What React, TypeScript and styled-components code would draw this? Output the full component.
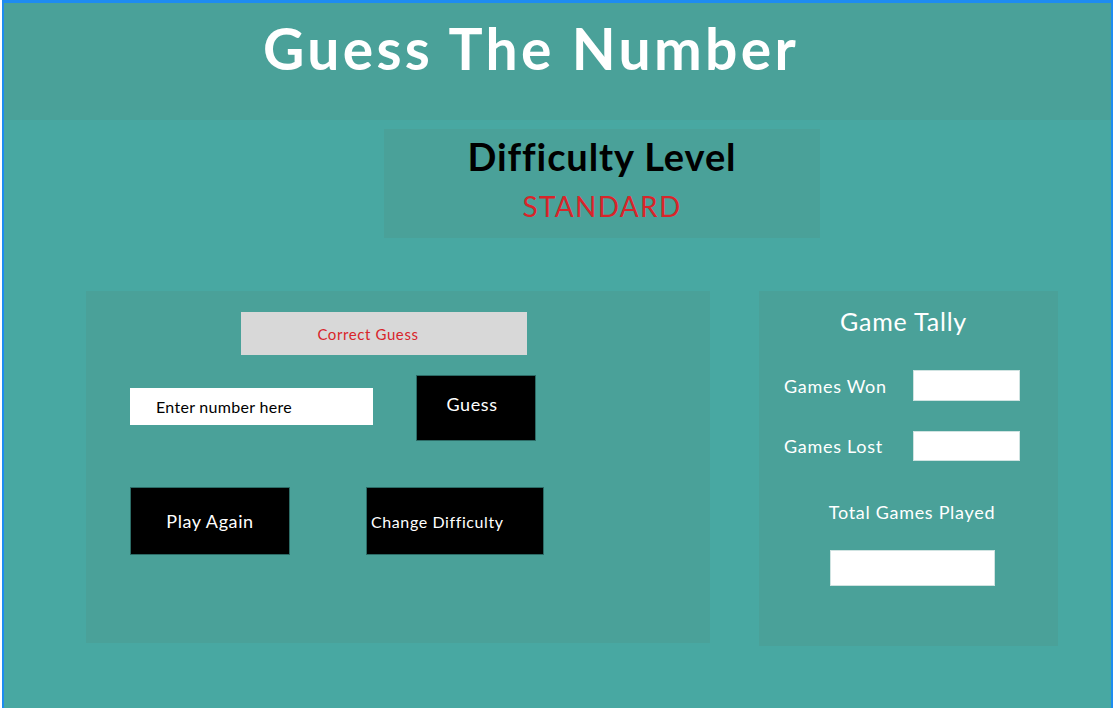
import React from "react";
import styled, { createGlobalStyle } from "styled-components";

const Global = createGlobalStyle`
  html, body { margin: 0; padding: 0; background: #ffffff; }
  body { font-family: "Lato", "Open Sans", sans-serif; overflow: hidden; }
  * { box-sizing: border-box; }
`;

const Frame = styled.div`
  margin-left: 2px;
  width: 1111px;
  height: 708px;
  border: 2px solid #1e8cf0;
  border-bottom: none;
  border-top-width: 3px;
  background: #48a8a2;
  display: flex;
  flex-direction: column;
`;

const Header = styled.header`
  height: 117px;
  background: #4aa199;
  display: flex;
  justify-content: flex-start;
  padding-left: 259px;
  padding-top: 10px;
`;

const Title = styled.h1`
  margin: 0;
  color: #ffffff;
  font-family: "Lato", sans-serif;
  font-weight: 700;
  font-size: 57px;
  letter-spacing: 3.3px;
  line-height: 70px;
`;

const Body = styled.main`
  display: flex;
  flex-direction: column;
  padding-top: 9px;
`;

const LevelBox = styled.section`
  margin-left: 380px;
  width: 436px;
  height: 109px;
  background: #4aa199;
  display: flex;
  flex-direction: column;
  align-items: center;
  padding-top: 4px;
`;

const LevelTitle = styled.h2`
  margin: 0;
  font-family: "Lato", sans-serif;
  font-weight: 700;
  font-size: 38px;
  letter-spacing: 0.9px;
  color: #000;
  line-height: 46px;
`;

const LevelValue = styled.div`
  margin-top: 9px;
  color: #d8252a;
  font-size: 28px;
  letter-spacing: 1.3px;
  line-height: 36px;
`;

const Row = styled.div`
  display: flex;
  align-items: flex-start;
  margin-top: 53px;
  margin-left: 82px;
  gap: 49px;
`;

const GamePanel = styled.section`
  width: 624px;
  height: 352px;
  background: #4aa199;
  display: flex;
  flex-direction: column;
  padding: 21px 0 0 44px;
`;

const Status = styled.div`
  margin-left: 111px;
  width: 286px;
  height: 43px;
  background: #d8d8d8;
  color: #d8252a;
  font-size: 15px;
  letter-spacing: 0.6px;
  display: flex;
  align-items: center;
  justify-content: center;
  padding-right: 32px;
`;

const GuessRow = styled.div`
  display: flex;
  align-items: center;
  margin-top: 20px;
  gap: 43px;
`;

const NumberInput = styled.input`
  width: 243px;
  height: 37px;
  border: none;
  background: #fff;
  padding-left: 26px;
  font-family: "Lato", sans-serif;
  font-size: 16px;
  letter-spacing: 0.3px;
  margin-top: -3px;
  outline: none;
  &::placeholder { color: #000; }
`;

const BlackButton = styled.button<{ $w: number; $h: number; $left?: boolean; $shift?: number }>`
  width: ${(p) => p.$w}px;
  height: ${(p) => p.$h}px;
  background: #000;
  color: #fff;
  border: 1px solid #2c6b66;
  font-family: "Lato", sans-serif;
  font-size: ${(p) => (p.$left ? 16 : 18)}px;
  letter-spacing: 0.6px;
  display: flex;
  align-items: center;
  justify-content: ${(p) => (p.$left ? "flex-start" : "center")};
  padding: 0 ${(p) => p.$shift ?? 0}px ${(p) => (p.$shift ? 8 : 0)}px ${(p) => (p.$left ? 4 : 0)}px;
`;

const ActionRow = styled.div`
  display: flex;
  margin-top: 46px;
  gap: 76px;
`;

const TallyPanel = styled.aside`
  width: 299px;
  height: 355px;
  background: #4aa199;
  display: flex;
  flex-direction: column;
  color: #fff;
  padding-top: 14px;
`;

const TallyTitle = styled.h3`
  margin: 0 10px 0 0;
  text-align: center;
  font-family: "Lato", sans-serif;
  font-weight: 400;
  font-size: 25px;
  letter-spacing: 0.8px;
  line-height: 32px;
`;

const StatRow = styled.div<{ $top: number }>`
  display: grid;
  grid-template-columns: 129px 107px;
  align-items: center;
  margin-top: ${(p) => p.$top}px;
  padding-left: 25px;
`;

const Label = styled.span`
  font-size: 18px;
  letter-spacing: 0.7px;
`;

const StatBox = styled.div<{ $w: number; $h: number }>`
  width: ${(p) => p.$w}px;
  height: ${(p) => p.$h}px;
  background: #fff;
  border: 1px solid #cfe3e1;
`;

const TotalBlock = styled.div`
  display: flex;
  flex-direction: column;
  align-items: center;
  margin-top: 40px;
  padding-left: 7px;
  gap: 27px;
`;

export default function App() {
  return (
    <>
      <Global />
      <Frame>
        <Header>
          <Title>Guess The Number</Title>
        </Header>
        <Body>
          <LevelBox>
            <LevelTitle>Difficulty Level</LevelTitle>
            <LevelValue>STANDARD</LevelValue>
          </LevelBox>
          <Row>
            <GamePanel>
              <Status>Correct Guess</Status>
              <GuessRow>
                <NumberInput placeholder="Enter number here" />
                <BlackButton $w={120} $h={66} $shift={8}>Guess</BlackButton>
              </GuessRow>
              <ActionRow>
                <BlackButton $w={160} $h={68}>Play Again</BlackButton>
                <BlackButton $w={178} $h={68} $left>Change Difficulty</BlackButton>
              </ActionRow>
            </GamePanel>
            <TallyPanel>
              <TallyTitle>Game Tally</TallyTitle>
              <StatRow $top={33}>
                <Label>Games Won</Label>
                <StatBox $w={107} $h={31} />
              </StatRow>
              <StatRow $top={30}>
                <Label>Games Lost</Label>
                <StatBox $w={107} $h={30} />
              </StatRow>
              <TotalBlock>
                <Label>Total Games Played</Label>
                <StatBox $w={165} $h={36} />
              </TotalBlock>
            </TallyPanel>
          </Row>
        </Body>
      </Frame>
    </>
  );
}
